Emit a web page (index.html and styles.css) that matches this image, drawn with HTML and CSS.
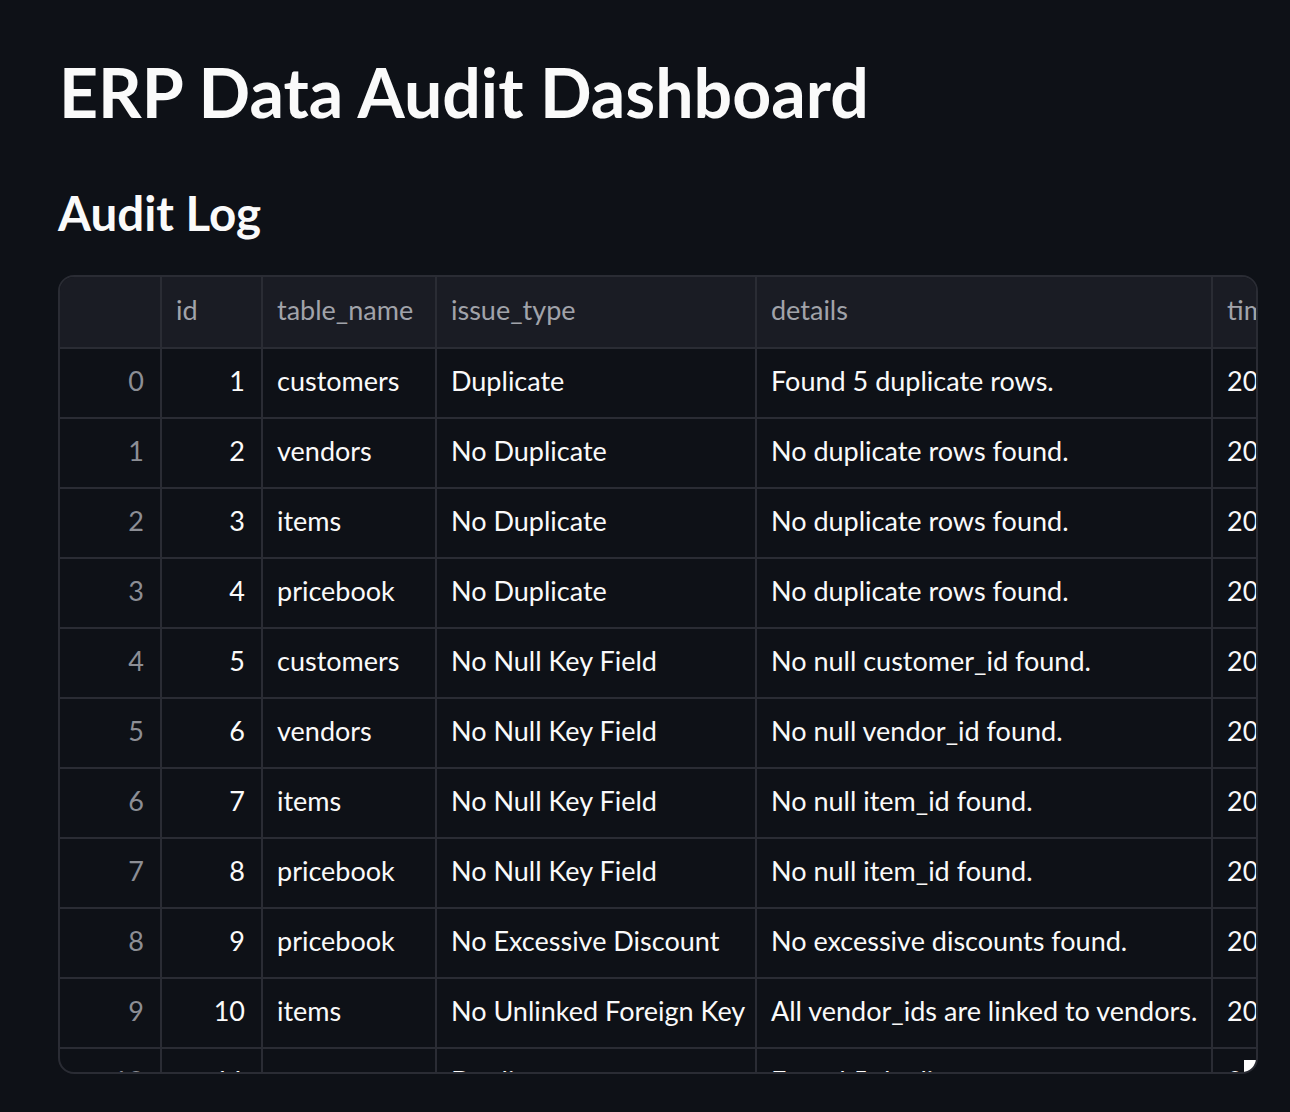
FILE: index.html
```html
<!DOCTYPE html>
<html>
<head>
<meta charset="utf-8">
<link rel="stylesheet" href="styles.css">
</head>
<body>
<main class="main">
  <h1 class="title">ERP Data Audit Dashboard</h1>
  <h2 class="subtitle">Audit Log</h2>
  <div class="grid-wrap">
    <div class="grid">
      <div class="hd"></div><div class="hd">id</div><div class="hd">table_name</div><div class="hd">issue_type</div><div class="hd">details</div><div class="hd">timestamp</div>

      <div class="c idx">0</div><div class="c num">1</div><div class="c">customers</div><div class="c">Duplicate</div><div class="c">Found 5 duplicate rows.</div><div class="c">2025-06-01 10:15:00</div>
      <div class="c idx">1</div><div class="c num">2</div><div class="c">vendors</div><div class="c">No Duplicate</div><div class="c">No duplicate rows found.</div><div class="c">2025-06-01 10:15:00</div>
      <div class="c idx">2</div><div class="c num">3</div><div class="c">items</div><div class="c">No Duplicate</div><div class="c">No duplicate rows found.</div><div class="c">2025-06-01 10:15:00</div>
      <div class="c idx">3</div><div class="c num">4</div><div class="c">pricebook</div><div class="c">No Duplicate</div><div class="c">No duplicate rows found.</div><div class="c">2025-06-01 10:15:00</div>
      <div class="c idx">4</div><div class="c num">5</div><div class="c">customers</div><div class="c">No Null Key Field</div><div class="c">No null customer_id found.</div><div class="c">2025-06-01 10:15:00</div>
      <div class="c idx">5</div><div class="c num">6</div><div class="c">vendors</div><div class="c">No Null Key Field</div><div class="c">No null vendor_id found.</div><div class="c">2025-06-01 10:15:00</div>
      <div class="c idx">6</div><div class="c num">7</div><div class="c">items</div><div class="c">No Null Key Field</div><div class="c">No null item_id found.</div><div class="c">2025-06-01 10:15:00</div>
      <div class="c idx">7</div><div class="c num">8</div><div class="c">pricebook</div><div class="c">No Null Key Field</div><div class="c">No null item_id found.</div><div class="c">2025-06-01 10:15:00</div>
      <div class="c idx">8</div><div class="c num">9</div><div class="c">pricebook</div><div class="c">No Excessive Discount</div><div class="c">No excessive discounts found.</div><div class="c">2025-06-01 10:15:00</div>
      <div class="c idx">9</div><div class="c num">10</div><div class="c">items</div><div class="c">No Unlinked Foreign Key</div><div class="c">All vendor_ids are linked to vendors.</div><div class="c">2025-06-01 10:15:00</div>
      <div class="c idx">10</div><div class="c num">11</div><div class="c">customers</div><div class="c">Duplicate</div><div class="c">Found 5 duplicate rows.</div><div class="c">2025-06-01 10:20:00</div>
    </div>
    <span class="corner"></span>
  </div>
</main>
</body>
</html>
```

FILE: styles.css
```css
html, body {
  margin: 0;
  padding: 0;
  background: #0e1117;
}
body {
  font-family: "Lato", "Noto Sans", sans-serif;
  color: #fafafa;
}
.main {
  padding: 51px 32px 0 58px;
}
.title {
  margin: 0;
  padding-left: 1px;
  font-size: 68px;
  line-height: 1.2;
  font-weight: 700;
}
.subtitle {
  margin: 51px 0 0 0;
  font-size: 47.5px;
  line-height: 1.2;
  font-weight: 700;
}
.grid-wrap {
  position: relative;
  margin-top: 34px;
  width: 1196px;
  height: 795px;
  border: 2px solid #2a2c34;
  border-radius: 16px;
  overflow: hidden;
  background: #0e1117;
}
.grid {
  display: grid;
  grid-template-columns: 102px 101px 174px 320px 456px 320px;
  grid-template-rows: 72px;
  grid-auto-rows: 70px;
  font-size: 27px;
}
.hd, .c {
  box-sizing: border-box;
  border-right: 2px solid #2a2c34;
  border-bottom: 2px solid #2a2c34;
  display: flex;
  align-items: center;
  padding: 0 14px 5px;
  white-space: nowrap;
  overflow: hidden;
}
.hd {
  background: #1a1c24;
  color: #a1a3aa;
  padding-bottom: 4px;
}
.c.idx {
  justify-content: flex-end;
  color: #8c8e95;
  padding-right: 16px;
}
.c.num {
  justify-content: flex-end;
  padding-right: 16px;
}
.corner {
  position: absolute;
  right: 0;
  bottom: 0;
  width: 12px;
  height: 12px;
  background: #ffffff;
}
```
